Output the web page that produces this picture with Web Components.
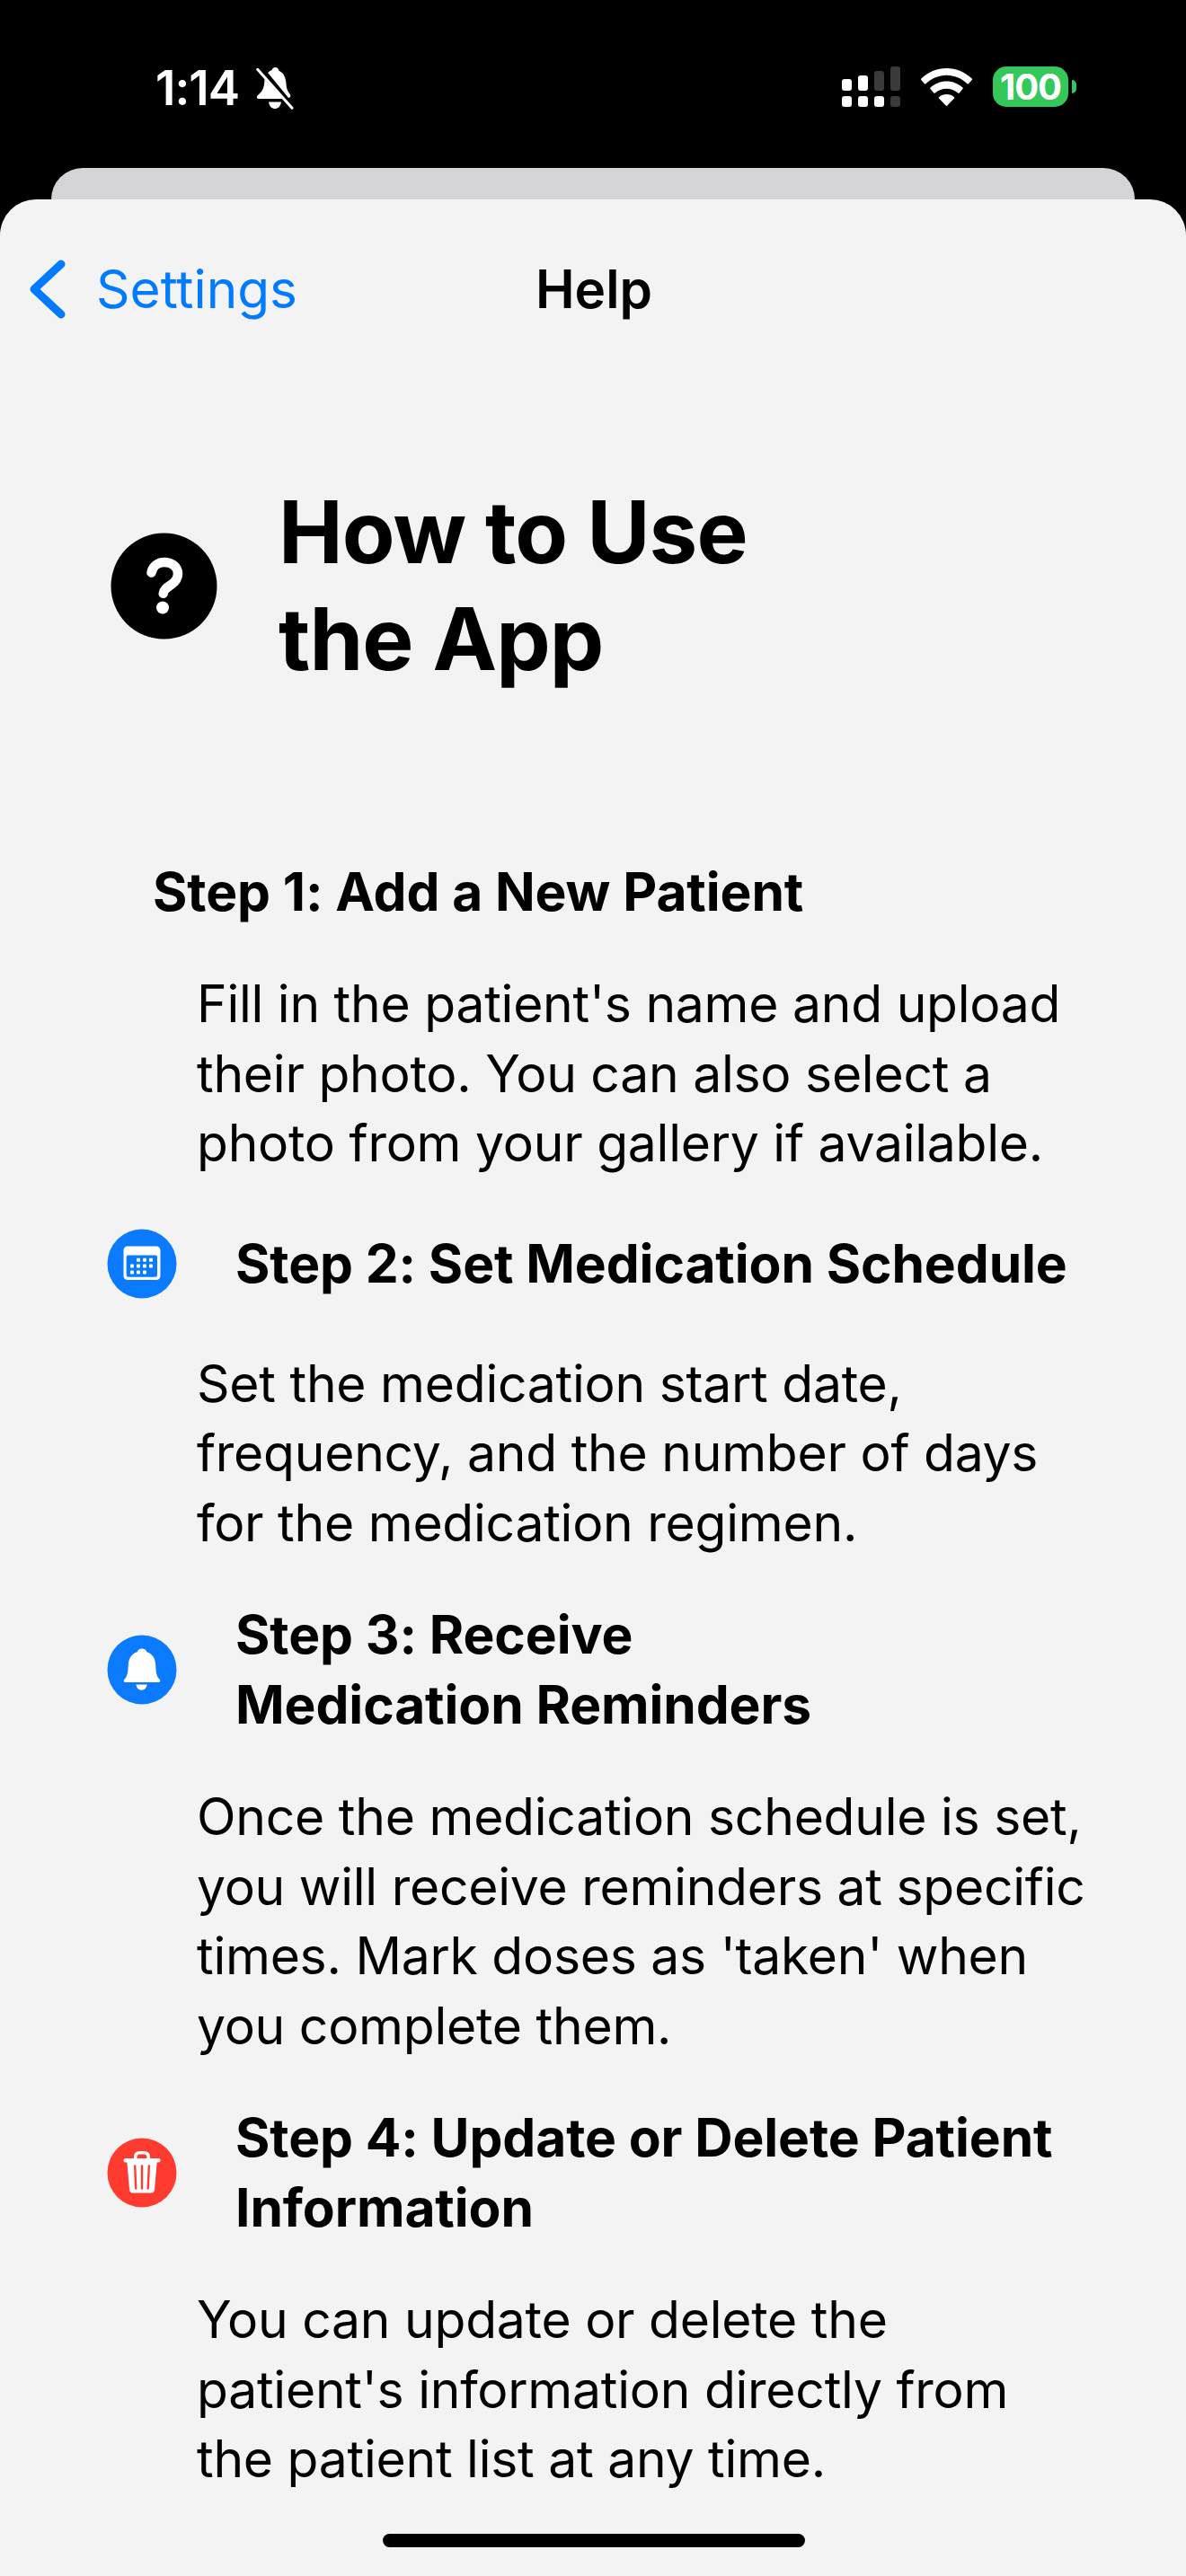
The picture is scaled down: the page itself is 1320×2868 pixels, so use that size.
<!DOCTYPE html>
<html lang="en">
<head>
<meta charset="utf-8">
<title>Help</title>
<style>
  html, body { margin: 0; padding: 0; background: #000; }
  body { font-family: Inter, "Noto Sans", sans-serif; }
</style>
</head>
<body>
<phone-screen>
  <status-bar slot="status" time="1:14" battery="100"></status-bar>
  <nav-bar back="Settings">Help</nav-bar>
  <help-title>How to Use<br>the App</help-title>
  <help-step>Step 1: Add a New Patient</help-step>
  <help-text>Fill in the patient's name and upload<br>their photo. You can also select a<br>photo from your gallery if available.</help-text>
  <help-step icon="calendar">Step 2: Set Medication Schedule</help-step>
  <help-text>Set the medication start date,<br>frequency, and the number of days<br>for the medication regimen.</help-text>
  <help-step icon="bell">Step 3: Receive<br>Medication Reminders</help-step>
  <help-text>Once the medication schedule is set,<br>you will receive reminders at specific<br>times. Mark doses as 'taken' when<br>you complete them.</help-text>
  <help-step icon="trash">Step 4: Update or Delete Patient<br>Information</help-step>
  <help-text>You can update or delete the<br>patient's information directly from<br>the patient list at any time.</help-text>
</phone-screen>

<script>
  const icons = {
    calendar: `
      <svg viewBox="0 0 78 78" width="78" height="78">
        <circle cx="39" cy="39" r="38.5" fill="#0a7aff"/>
        <rect x="18.5" y="19.5" width="41" height="37.5" rx="4.5" fill="#fff"/>
        <rect x="21.7" y="29.4" width="34.3" height="24.4" rx="2" fill="#0a7aff"/>
        <g fill="#fff">
          <rect x="33" y="32.7" width="4" height="4" rx="1"/><rect x="40" y="32.7" width="4" height="4" rx="1"/><rect x="47" y="32.7" width="4" height="4" rx="1"/>
          <rect x="26" y="39.4" width="4" height="4" rx="1"/><rect x="33" y="39.4" width="4" height="4" rx="1"/><rect x="40" y="39.4" width="4" height="4" rx="1"/><rect x="47" y="39.4" width="4" height="4" rx="1"/>
          <rect x="26" y="46.4" width="4" height="4" rx="1"/><rect x="33" y="46.4" width="4" height="4" rx="1"/><rect x="40" y="46.4" width="4" height="4" rx="1"/>
        </g>
      </svg>`,
    bell: `
      <svg viewBox="0 0 78 78" width="78" height="78">
        <circle cx="39" cy="39" r="38.5" fill="#0a7aff"/>
        <path fill="#fff" d="M39 15.500c-2.800 0-4.800 1.500-5.300 3.700C27.500 21 24.200 26.300 23.800 33.500 23.400 41.500 23 46 19.600 49.500c-1.600 1.700-1 3.500 1.200 3.500h36.400c2.200 0 2.800-1.800 1.200-3.500C55 46 54.600 41.500 54.200 33.500 53.800 26.300 50.500 21 44.300 19.200 43.800 17 41.800 15.500 39 15.500z"/>
        <path fill="#fff" d="M32.400 55.500h12.300c-.6 3.800-3 6.200-6.150 6.200s-5.550-2.400-6.150-6.200z"/>
      </svg>`,
    trash: `
      <svg viewBox="0 0 78 78" width="78" height="78">
        <circle cx="39" cy="39" r="38.500" fill="#ff3b30"/>
        <path fill="none" stroke="#fff" stroke-width="3.600" d="M31.800 25v-3.500c0-3 1.700-4.800 4.500-4.800h5.400c2.800 0 4.500 1.800 4.500 4.800V25"/>
        <rect x="18.500" y="23" width="41" height="4.400" rx="2" fill="#fff"/>
        <path fill="#fff" d="M22.400 27h33.300l-2.700 31c-.2 2.200-1.400 3.400-3.600 3.400H28.700c-2.200 0-3.400-1.200-3.600-3.400z"/>
        <g stroke="#ff3b30" stroke-width="2.400" stroke-linecap="round">
          <path d="M31.200 31.500l1 25"/><path d="M39 31.500v25"/><path d="M46.800 31.500l-1 25"/>
        </g>
      </svg>`,
    question: `
      <svg viewBox="0 0 119 119" width="119" height="119">
        <circle cx="59.500" cy="59.500" r="59" fill="#000"/>
        <path fill="none" stroke="#fff" stroke-width="10.500" stroke-linecap="round" stroke-linejoin="round" d="M45.500 44.500c1.500-7 7-11.500 14.300-11.500 8.700 0 15.200 5.200 15.200 12.800 0 5.700-3 9-7.500 12.200-5 3.500-8.500 5.500-8.800 9.800"/>
        <circle cx="58" cy="83.500" r="7" fill="#fff"/>
      </svg>`
  };

  class PhoneScreen extends HTMLElement {
    constructor() {
      super();
      this.attachShadow({ mode: 'open' }).innerHTML = `
        <style>
          :host { display: block; width: 1320px; height: 2868px; background: #000; position: relative; overflow: hidden; }
          .back { height: 35px; margin: 0 57px; background: #d5d4d9; border-radius: 36px 36px 0 0; }
          .sheet { height: 2646px; background: #f3f3f3; border-radius: 40px 40px 0 0; }
          .home { position: absolute; left: 426px; bottom: 32px; width: 470px; height: 15px; border-radius: 8px; background: #000; }
        </style>
        <slot name="status"></slot>
        <div class="back"></div>
        <div class="sheet"><slot></slot></div>
        <div class="home"></div>`;
    }
  }

  class StatusBar extends HTMLElement {
    constructor() {
      super();
      const time = this.getAttribute('time');
      const battery = this.getAttribute('battery');
      this.attachShadow({ mode: 'open' }).innerHTML = `
        <style>
          :host { display: flex; align-items: flex-start; height: 187px; background: #000; color: #fff; box-sizing: border-box; padding: 74px 0 0 173px; }
          .time { font-size: 53px; font-weight: 600; line-height: 48px; letter-spacing: -1px; width: 112px; }
          .bell { margin-top: 1px; }
          .right { margin-left: auto; display: flex; align-items: flex-start; padding-right: 122px; }
          .wifi { margin: 2px 23px 0 23px; }
          .battery { display: flex; align-items: center; }
          .level { width: 84px; height: 45px; border-radius: 15px; background: #34c759; font-size: 40px; font-weight: 700; line-height: 45px; text-align: center; letter-spacing: -1px; }
          .cap { width: 5px; height: 15px; margin-left: 4px; border-radius: 0 8px 8px 0; background: #34c759; }
        </style>
        <span class="time">${time}</span>
        <svg class="bell" width="42" height="47" viewBox="0 0 42 47">
          <path fill="#fff" d="M21.500 0c-2 0-3.500 1.300-3.900 3.100-1.800.6-3.300 1.600-4.500 3l23 28c2.200-.5 3-2.500 1.700-4.200-3-3.800-3.900-6.400-4.300-11.900C33 11 30.500 6 25.500 3.800 25 1.600 23.500 0 21.500 0z"/>
          <path fill="#fff" d="M9.500 13C9.200 21 8.200 26 2 31c-2 1.800-1.300 4 1.200 4h26.500z"/>
          <path fill="#fff" d="M14 38.500h14c-.6 5-3.800 7.500-7 7.500s-6.400-2.500-7-7.500z"/>
          <path stroke="#000" stroke-width="4.500" fill="none" d="M5 1l35 42"/>
          <path stroke="#fff" stroke-width="3" stroke-linecap="round" fill="none" d="M1.700 2.300l38.300 43"/>
        </svg>
        <span class="right">
          <svg width="65" height="45" viewBox="0 0 65 45">
            <g fill="#fff">
              <rect x="0" y="14" width="11" height="13" rx="3"/>
              <rect x="18" y="10" width="11" height="17" rx="3"/>
              <rect x="0" y="33" width="11" height="12" rx="3"/>
              <rect x="18" y="33" width="11" height="12" rx="3"/>
              <rect x="36" y="33" width="11" height="12" rx="3"/>
            </g>
            <g fill="#3a3a3a">
              <rect x="36" y="5" width="11" height="22" rx="3"/>
              <rect x="54" y="0" width="11" height="27" rx="3"/>
              <rect x="54" y="33" width="11" height="12" rx="3"/>
            </g>
          </svg>
          <svg class="wifi" width="57" height="42" viewBox="0 0 57 42">
            <path fill="#fff" d="M28.500 0C17.500 0 7.800 4.300.3 11.500c-.4.400-.4 1 0 1.400l3.700 4.300c.4.500 1 .5 1.500 0C11.800 11.300 19.800 7.800 28.500 7.800s16.700 3.500 23 9.400c.5.500 1.100.5 1.500 0l3.700-4.300c.4-.4.400-1 0-1.400C49.200 4.300 39.500 0 28.500 0z"/>
            <path fill="#fff" d="M28.500 14.500c-7 0-13.300 2.700-18 7.100-.4.400-.4 1 0 1.400l3.800 4.400c.4.500 1 .5 1.500.1 3.500-3 7.900-4.800 12.700-4.800s9.200 1.800 12.700 4.800c.5.400 1.100.4 1.500-.1l3.800-4.400c.4-.4.400-1 0-1.400-4.700-4.400-11-7.100-18-7.100z"/>
            <path fill="#fff" d="M28.500 29c-3.300 0-6.300 1.200-8.500 3.200-.4.400-.4.900 0 1.400l7.700 8c.5.500 1.100.5 1.600 0l7.700-8c.4-.5.400-1 0-1.400-2.200-2-5.200-3.200-8.500-3.200z"/>
          </svg>
          <span class="battery"><span class="level">${battery}</span><span class="cap"></span></span>
        </span>`;
    }
  }

  class NavBar extends HTMLElement {
    constructor() {
      super();
      const back = this.getAttribute('back');
      this.attachShadow({ mode: 'open' }).innerHTML = `
        <style>
          :host { display: grid; grid-template-columns: 1fr auto 1fr; align-items: center; height: 200px; }
          .back { display: flex; align-items: center; gap: 34px; padding-left: 33px; color: #007aff; font-size: 58.500px; }
          .back span { padding-bottom: 2px; }
          .title { font-size: 58.500px; font-weight: 600; color: #000; padding: 0 0 2px 2px; }
        </style>
        <span class="back">
          <svg width="40" height="66" viewBox="0 0 40 66"><path d="M35 5L5 33l30 28" fill="none" stroke="#007aff" stroke-width="9" stroke-linecap="round" stroke-linejoin="round"/></svg>
          <span>${back}</span>
        </span>
        <span class="title"><slot></slot></span>
        <span></span>`;
    }
  }

  class HelpTitle extends HTMLElement {
    constructor() {
      super();
      this.attachShadow({ mode: 'open' }).innerHTML = `
        <style>
          :host { display: flex; align-items: center; gap: 68px; margin: 111px 0 183px; padding-left: 123px; }
          h1 { margin: 0; font-size: 96px; font-weight: 700; line-height: 119px; letter-spacing: -.9px; color: #000; }
          svg { display: block; }
        </style>
        ${icons.question}
        <h1><slot></slot></h1>`;
    }
  }

  class HelpStep extends HTMLElement {
    constructor() {
      super();
      const icon = this.getAttribute('icon');
      this.attachShadow({ mode: 'open' }).innerHTML = `
        <style>
          :host { display: flex; align-items: center; gap: 65px; min-height: ${icon ? 96 : 78}px; margin-bottom: 47px; padding-left: ${icon ? 119 : 170}px; }
          h2 { margin: 0; font-size: 58.700px; font-weight: 700; line-height: 78px; letter-spacing: -.1px; font-variant-ligatures: no-contextual; color: #000; white-space: nowrap; }
          svg { display: block; }
        </style>
        ${icon ? icons[icon] : ''}
        <h2><slot></slot></h2>`;
    }
  }

  class HelpText extends HTMLElement {
    constructor() {
      super();
      this.attachShadow({ mode: 'open' }).innerHTML = `
        <style>
          :host { display: block; margin-bottom: 47px; padding-left: 219px; font-size: 57px; letter-spacing: -.25px; line-height: 77.500px; color: #000; white-space: nowrap; }
        </style>
        <slot></slot>`;
    }
  }

  customElements.define('phone-screen', PhoneScreen);
  customElements.define('status-bar', StatusBar);
  customElements.define('nav-bar', NavBar);
  customElements.define('help-title', HelpTitle);
  customElements.define('help-step', HelpStep);
  customElements.define('help-text', HelpText);
</script>
</body>
</html>
